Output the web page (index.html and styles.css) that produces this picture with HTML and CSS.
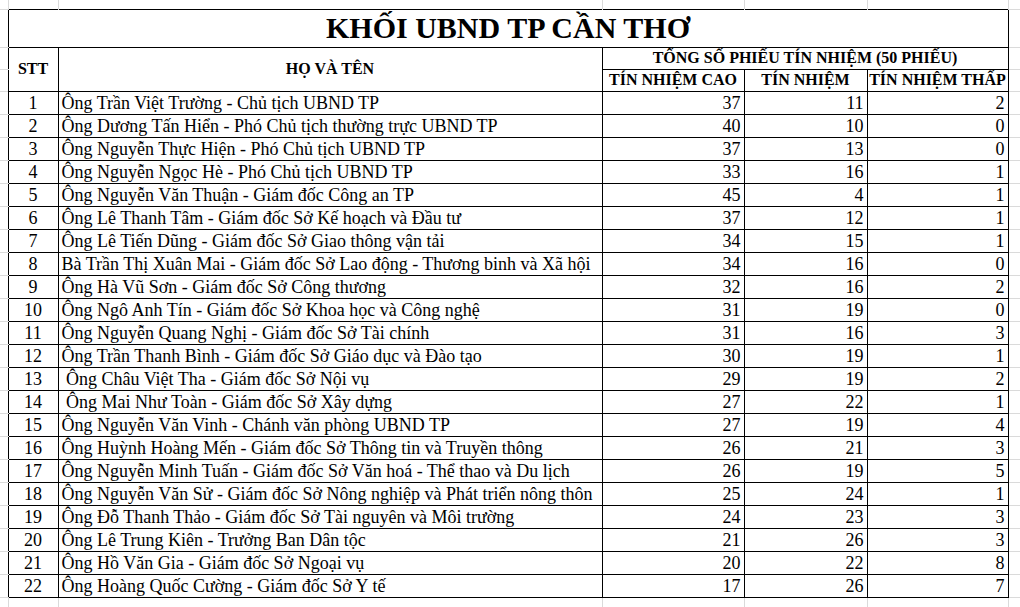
FILE: index.html
```html
<!DOCTYPE html>
<html lang="vi">
<head>
<meta charset="utf-8">
<title>Khối UBND TP Cần Thơ</title>
<link rel="stylesheet" href="styles.css">
</head>
<body>
<table class="sheet">
  <colgroup>
    <col class="c-gl"><col class="c-stt"><col class="c-name"><col class="c-cao"><col class="c-tn"><col class="c-thap"><col class="c-gr">
  </colgroup>
  <tbody>
    <tr class="r-top">
      <td class="g-corner"></td><td class="g-top"></td><td class="g-top"></td><td class="g-top"></td><td class="g-top"></td><td class="g-top"></td><td class="g-top-end"></td>
    </tr>
    <tr class="r-title">
      <td class="g-l"></td>
      <td class="title" colspan="5">KHỐI UBND TP CẦN THƠ</td>
      <td class="g-r"></td>
    </tr>
    <tr class="r-head">
      <td class="g-l"></td>
      <td class="hd" rowspan="2">STT</td>
      <td class="hd" rowspan="2">HỌ VÀ TÊN</td>
      <td class="hd" colspan="3">TỔNG SỐ PHIẾU TÍN NHIỆM (50 PHIẾU)</td>
      <td class="g-r"></td>
    </tr>
    <tr class="r-head">
      <td class="g-l"></td>
      <td class="hd">TÍN NHIỆM CAO</td>
      <td class="hd">TÍN NHIỆM</td>
      <td class="hd">TÍN NHIỆM THẤP</td>
      <td class="g-r"></td>
    </tr>
    <tr><td class="g-l"></td><td class="stt">1</td><td class="name">Ông Trần Việt Trường - Chủ tịch UBND TP</td><td class="num">37</td><td class="num">11</td><td class="num">2</td><td class="g-r"></td></tr>
    <tr><td class="g-l"></td><td class="stt">2</td><td class="name">Ông Dương Tấn Hiển - Phó Chủ tịch thường trực UBND TP</td><td class="num">40</td><td class="num">10</td><td class="num">0</td><td class="g-r"></td></tr>
    <tr><td class="g-l"></td><td class="stt">3</td><td class="name">Ông Nguyễn Thực Hiện - Phó Chủ tịch UBND TP</td><td class="num">37</td><td class="num">13</td><td class="num">0</td><td class="g-r"></td></tr>
    <tr><td class="g-l"></td><td class="stt">4</td><td class="name">Ông Nguyễn Ngọc Hè - Phó Chủ tịch UBND TP</td><td class="num">33</td><td class="num">16</td><td class="num">1</td><td class="g-r"></td></tr>
    <tr><td class="g-l"></td><td class="stt">5</td><td class="name">Ông Nguyễn Văn Thuận - Giám đốc Công an TP</td><td class="num">45</td><td class="num">4</td><td class="num">1</td><td class="g-r"></td></tr>
    <tr><td class="g-l"></td><td class="stt">6</td><td class="name">Ông Lê Thanh Tâm - Giám đốc Sở Kế hoạch và Đầu tư</td><td class="num">37</td><td class="num">12</td><td class="num">1</td><td class="g-r"></td></tr>
    <tr><td class="g-l"></td><td class="stt">7</td><td class="name">Ông Lê Tiến Dũng - Giám đốc Sở Giao thông vận tải</td><td class="num">34</td><td class="num">15</td><td class="num">1</td><td class="g-r"></td></tr>
    <tr><td class="g-l"></td><td class="stt">8</td><td class="name">Bà Trần Thị Xuân Mai - Giám đốc Sở Lao động - Thương binh và Xã hội</td><td class="num">34</td><td class="num">16</td><td class="num">0</td><td class="g-r"></td></tr>
    <tr><td class="g-l"></td><td class="stt">9</td><td class="name">Ông Hà Vũ Sơn - Giám đốc Sở Công thương</td><td class="num">32</td><td class="num">16</td><td class="num">2</td><td class="g-r"></td></tr>
    <tr><td class="g-l"></td><td class="stt">10</td><td class="name">Ông Ngô Anh Tín - Giám đốc Sở Khoa học và Công nghệ</td><td class="num">31</td><td class="num">19</td><td class="num">0</td><td class="g-r"></td></tr>
    <tr><td class="g-l"></td><td class="stt">11</td><td class="name">Ông Nguyễn Quang Nghị - Giám đốc Sở Tài chính</td><td class="num">31</td><td class="num">16</td><td class="num">3</td><td class="g-r"></td></tr>
    <tr><td class="g-l"></td><td class="stt">12</td><td class="name">Ông Trần Thanh Bình - Giám đốc Sở Giáo dục và Đào tạo</td><td class="num">30</td><td class="num">19</td><td class="num">1</td><td class="g-r"></td></tr>
    <tr><td class="g-l"></td><td class="stt">13</td><td class="name"> Ông Châu Việt Tha - Giám đốc Sở Nội vụ</td><td class="num">29</td><td class="num">19</td><td class="num">2</td><td class="g-r"></td></tr>
    <tr><td class="g-l"></td><td class="stt">14</td><td class="name"> Ông Mai Như Toàn - Giám đốc Sở Xây dựng</td><td class="num">27</td><td class="num">22</td><td class="num">1</td><td class="g-r"></td></tr>
    <tr><td class="g-l"></td><td class="stt">15</td><td class="name">Ông Nguyễn Văn Vinh - Chánh văn phòng UBND TP</td><td class="num">27</td><td class="num">19</td><td class="num">4</td><td class="g-r"></td></tr>
    <tr><td class="g-l"></td><td class="stt">16</td><td class="name">Ông Huỳnh Hoàng Mến - Giám đốc Sở Thông tin và Truyền thông</td><td class="num">26</td><td class="num">21</td><td class="num">3</td><td class="g-r"></td></tr>
    <tr><td class="g-l"></td><td class="stt">17</td><td class="name">Ông Nguyễn Minh Tuấn - Giám đốc Sở Văn hoá - Thể thao và Du lịch</td><td class="num">26</td><td class="num">19</td><td class="num">5</td><td class="g-r"></td></tr>
    <tr><td class="g-l"></td><td class="stt">18</td><td class="name">Ông Nguyễn Văn Sử - Giám đốc Sở Nông nghiệp và Phát triển nông thôn</td><td class="num">25</td><td class="num">24</td><td class="num">1</td><td class="g-r"></td></tr>
    <tr><td class="g-l"></td><td class="stt">19</td><td class="name">Ông Đỗ Thanh Thảo - Giám đốc Sở Tài nguyên và Môi trường</td><td class="num">24</td><td class="num">23</td><td class="num">3</td><td class="g-r"></td></tr>
    <tr><td class="g-l"></td><td class="stt">20</td><td class="name">Ông Lê Trung Kiên - Trưởng Ban Dân tộc</td><td class="num">21</td><td class="num">26</td><td class="num">3</td><td class="g-r"></td></tr>
    <tr><td class="g-l"></td><td class="stt">21</td><td class="name">Ông Hồ Văn Gia - Giám đốc Sở Ngoại vụ</td><td class="num">20</td><td class="num">22</td><td class="num">8</td><td class="g-r"></td></tr>
    <tr><td class="g-l"></td><td class="stt">22</td><td class="name">Ông Hoàng Quốc Cường - Giám đốc Sở Y tế</td><td class="num">17</td><td class="num">26</td><td class="num">7</td><td class="g-r"></td></tr>
    <tr class="r-bottom">
      <td class="g-bot"></td><td class="g-bot"></td><td class="g-bot"></td><td class="g-bot"></td><td class="g-bot"></td><td class="g-bot"></td><td class="g-bot-end"></td>
    </tr>
  </tbody>
</table>
</body>
</html>
```

FILE: styles.css
```css
html, body {
  margin: 0;
  padding: 0;
  background: #ffffff;
  overflow: hidden;
}

body {
  font-family: "Liberation Serif", "Times New Roman", serif;
  color: #000;
}

.sheet {
  border-collapse: collapse;
  table-layout: fixed;
  width: 1020px;
}

.c-gl { width: 8px; }
.c-stt { width: 50px; }
.c-name { width: 544px; }
.c-cao { width: 142px; }
.c-tn { width: 123px; }
.c-thap { width: 141px; }
.c-gr { width: 12px; }

.sheet tr { height: 23px; }
.sheet tr.r-top { height: 9px; }
.sheet tr.r-title { height: 38px; }
.sheet tr.r-head { height: 22px; }
.sheet tr.r-bottom { height: 10px; }

.sheet td {
  padding: 0;
  border: 1px solid #000;
  white-space: nowrap;
  overflow: hidden;
}

/* spreadsheet gutter grid lines */
.sheet td.g-corner {
  border: none;
  border-right: 1px solid #dadada;
  border-bottom: 1px solid #dadada;
}
.sheet td.g-top {
  border: none;
  border-right: 1px solid #dadada;
}
.sheet td.g-top-end {
  border: none;
  border-bottom: 1px solid #dadada;
}
.sheet td.g-l {
  border: none;
  border-bottom: 1px solid #dadada;
}
.sheet td.g-r {
  border: none;
  border-bottom: 1px solid #dadada;
}
.sheet td.g-bot {
  border: none;
  border-right: 1px solid #dadada;
}
.sheet td.g-bot-end {
  border: none;
}

.title {
  font-size: 30px;
  font-weight: bold;
  text-align: center;
  vertical-align: middle;
  line-height: 34px;
}

.hd {
  font-size: 16px;
  font-weight: bold;
  text-align: center;
  vertical-align: middle;
  line-height: 18px;
}

.stt, .name, .num {
  font-size: 18px;
  line-height: 20px;
  vertical-align: bottom;
}

.sheet td.stt {
  text-align: center;
  padding-bottom: 1px;
}

.sheet td.name {
  text-align: left;
  padding: 0 3px 1px 3px;
  white-space: pre;
}

.sheet td.num {
  text-align: right;
  padding: 0 3px 1px 3px;
}
```
